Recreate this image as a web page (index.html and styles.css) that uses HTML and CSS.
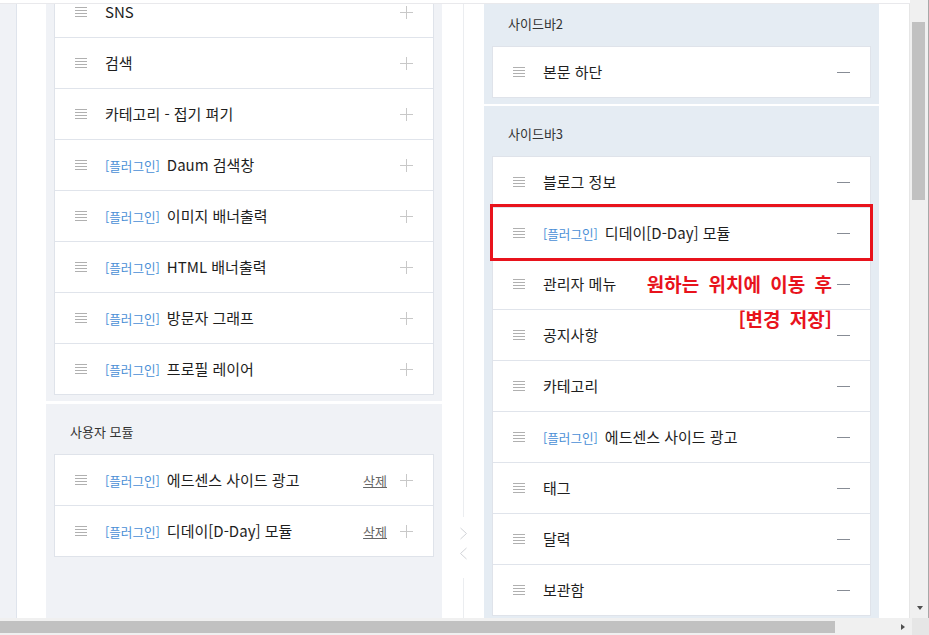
FILE: index.html
```html
<!DOCTYPE html>
<html lang="ko">
<head>
<meta charset="utf-8">
<title>사이드바 관리</title>
<link rel="stylesheet" href="styles.css">
</head>
<body>
<div class="window">
  <div class="main">
    <div class="content">
      <div class="topbar"></div>
      <div class="workspace">
        <div class="gutter"></div>
        <div class="spacer"></div>

        <div class="col col-left">
          <section class="panel panel-first">
            <ul class="card">
              <li class="row"><span class="grip"></span><span class="name">SNS</span><span class="plus"></span></li>
              <li class="row"><span class="grip"></span><span class="name">검색</span><span class="plus"></span></li>
              <li class="row"><span class="grip"></span><span class="name">카테고리 - 접기 펴기</span><span class="plus"></span></li>
              <li class="row"><span class="grip"></span><span class="name"><span class="tag">[플러그인]</span>Daum 검색창</span><span class="plus"></span></li>
              <li class="row"><span class="grip"></span><span class="name"><span class="tag">[플러그인]</span>이미지 배너출력</span><span class="plus"></span></li>
              <li class="row"><span class="grip"></span><span class="name"><span class="tag">[플러그인]</span>HTML 배너출력</span><span class="plus"></span></li>
              <li class="row"><span class="grip"></span><span class="name"><span class="tag">[플러그인]</span>방문자 그래프</span><span class="plus"></span></li>
              <li class="row"><span class="grip"></span><span class="name"><span class="tag">[플러그인]</span>프로필 레이어</span><span class="plus"></span></li>
            </ul>
          </section>
          <section class="panel panel-fill">
            <h3 class="panel-title">사용자 모듈</h3>
            <ul class="card">
              <li class="row"><span class="grip"></span><span class="name"><span class="tag">[플러그인]</span>에드센스 사이드 광고</span><a class="del">삭제</a><span class="plus"></span></li>
              <li class="row"><span class="grip"></span><span class="name"><span class="tag">[플러그인]</span>디데이[D-Day] 모듈</span><a class="del">삭제</a><span class="plus"></span></li>
            </ul>
          </section>
        </div>

        <div class="mid">
          <div class="vline vline-top"></div>
          <div class="arrows">
            <svg width="9" height="13" viewBox="0 0 9 13"><path d="M1.5 1l6 5.5-6 5.5" fill="none" stroke="#d2d4d8" stroke-width="1"/></svg>
            <svg width="9" height="13" viewBox="0 0 9 13"><path d="M7.5 1l-6 5.5 6 5.5" fill="none" stroke="#d2d4d8" stroke-width="1"/></svg>
          </div>
          <div class="vline vline-bottom"></div>
        </div>

        <div class="col col-right">
          <section class="panel panel-side panel-first-r">
            <h3 class="panel-title">사이드바2</h3>
            <ul class="card">
              <li class="row"><span class="grip"></span><span class="name">본문 하단</span><span class="minus"></span></li>
            </ul>
          </section>
          <section class="panel panel-side panel-fill">
            <h3 class="panel-title">사이드바3</h3>
            <ul class="card">
              <li class="row"><span class="grip"></span><span class="name">블로그 정보</span><span class="minus"></span></li>
              <li class="row row-marked"><span class="grip"></span><span class="name"><span class="tag">[플러그인]</span>디데이[D-Day] 모듈</span><span class="minus"></span></li>
              <li class="row"><span class="grip"></span><span class="name">관리자 메뉴</span><span class="minus"></span></li>
              <li class="row"><span class="grip"></span><span class="name">공지사항</span><span class="minus"></span></li>
              <li class="row"><span class="grip"></span><span class="name">카테고리</span><span class="minus"></span></li>
              <li class="row"><span class="grip"></span><span class="name"><span class="tag">[플러그인]</span>에드센스 사이드 광고</span><span class="minus"></span></li>
              <li class="row"><span class="grip"></span><span class="name">태그</span><span class="minus"></span></li>
              <li class="row"><span class="grip"></span><span class="name">달력</span><span class="minus"></span></li>
              <li class="row"><span class="grip"></span><span class="name">보관함</span><span class="minus"></span></li>
            </ul>
          </section>
        </div>

        <div class="rest"></div>

        <p class="note">원하는 위치에 이동 후<br>[변경 저장]</p>
      </div>
    </div>
    <div class="vscroll">
      <div class="vthumb"></div>
      <div class="vgap"></div>
      <div class="arrow-down"></div>
    </div>
  </div>
  <div class="hscroll">
    <div class="hthumb"></div>
    <div class="hgap"></div>
    <div class="arrow-right"></div>
    <div class="corner"></div>
  </div>
</div>
</body>
</html>
```

FILE: styles.css
```css
* { box-sizing: border-box; }

html, body {
  margin: 0;
  padding: 0;
  background: #fff;
}

body {
  width: 929px;
  height: 635px;
  overflow: hidden;
  font-family: "Noto Sans CJK KR", "Noto Sans", "Liberation Sans", sans-serif;
  color: #222;
}

.window {
  display: flex;
  flex-direction: column;
  width: 929px;
  height: 635px;
}

.main {
  display: flex;
  height: 618px;
}

.content {
  width: 910px;
  height: 618px;
  display: flex;
  flex-direction: column;
  overflow: hidden;
}

.topbar {
  height: 4px;
  flex: none;
  border-bottom: 1px solid #e9e9ec;
  background: #fff;
}

.workspace {
  position: relative;
  flex: 1;
  display: flex;
  overflow: hidden;
}

.gutter {
  width: 17px;
  flex: none;
  background: #f0f2f6;
  border-right: 1px solid #dfe4ec;
}

.spacer {
  width: 29px;
  flex: none;
}

.col {
  flex: none;
  display: flex;
  flex-direction: column;
  gap: 3px;
}

.col-left {
  width: 396px;
  margin-top: -18px;
}

.col-right {
  width: 395px;
  margin-top: -8px;
  gap: 2px;
}

.panel {
  background: #f0f2f6;
  padding: 20px 8px 6px;
}

.panel-first {
  padding-top: 0;
}

.panel-side {
  background: #e5ecf3;
}

.panel-fill {
  flex: 1;
}

.panel-title {
  margin: 0 0 14px 16px;
  font-size: 13px;
  line-height: 16px;
  font-weight: 400;
  color: #333;
}

.card {
  list-style: none;
  margin: 0;
  padding: 0;
  background: #fff;
  border: 1px solid #dfe3ea;
}

.row {
  display: flex;
  align-items: center;
  height: 50px;
  padding: 0 20px;
  background: #fff;
}

.row + .row {
  border-top: 1px solid #e0e4eb;
  height: 51px;
}

.row-marked {
  outline: 3px solid #e8131c;
}

.grip {
  flex: none;
  width: 12px;
  height: 10px;
  background: repeating-linear-gradient(to bottom, #b0b0b0 0 1px, transparent 1px 3px);
}

.name {
  flex: 1;
  margin-left: 18px;
  font-size: 15px;
  line-height: 20px;
  color: #1e1e1e;
  white-space: nowrap;
}

.tag {
  font-size: 12.6px;
  color: #4a8fd6;
  margin-right: 7px;
}

.del {
  font-size: 13px;
  color: #666;
  text-decoration: underline;
  margin-right: 13px;
}

.plus {
  flex: none;
  width: 13px;
  height: 13px;
  background:
    linear-gradient(#c8c8c8, #c8c8c8) center / 13px 1px no-repeat,
    linear-gradient(#c8c8c8, #c8c8c8) center / 1px 13px no-repeat;
}

.minus {
  flex: none;
  width: 13px;
  height: 1px;
  background: #878c95;
}

.mid {
  width: 42px;
  flex: none;
  display: flex;
  flex-direction: column;
  align-items: center;
}

.vline {
  width: 1px;
  background: #ebedf0;
}

.vline-top {
  height: 513px;
}

.arrows {
  display: flex;
  flex-direction: column;
  align-items: center;
  gap: 7px;
  padding: 10px 0 0;
  height: 61px;
}

.arrows svg {
  display: block;
}

.vline-bottom {
  flex: 1;
}

.rest {
  flex: 1;
  border-right: 1px solid #e6e6e6;
}

.note {
  position: absolute;
  left: 520px;
  top: 262px;
  width: 312px;
  margin: 0;
  text-align: right;
  font-size: 19px;
  line-height: 35px;
  font-weight: 700;
  color: #e8131c;
  word-spacing: 4px;
}

.vscroll {
  width: 19px;
  height: 618px;
  background: #f0f0f0;
  border-right: 1px solid #a8a8a8;
  display: flex;
  flex-direction: column;
  align-items: flex-start;
  padding: 22px 0 8px 2px;
}

.vthumb {
  width: 13px;
  height: 178px;
  background: #c1c1c1;
}

.vgap {
  flex: 1;
}

.arrow-down {
  align-self: center;
  width: 0;
  height: 0;
  border-left: 3.5px solid transparent;
  border-right: 3.5px solid transparent;
  border-top: 4px solid #505050;
}

.hscroll {
  height: 17px;
  display: flex;
  align-items: center;
  background: #f0f0f0;
}

.hthumb {
  width: 835px;
  height: 12px;
  background: #c1c1c1;
}

.hgap {
  flex: 1;
}

.arrow-right {
  width: 0;
  height: 0;
  border-top: 3.5px solid transparent;
  border-bottom: 3.5px solid transparent;
  border-left: 4px solid #505050;
  margin-right: 7px;
}

.corner {
  width: 17px;
  height: 17px;
  background: #e6e6e6;
}
```
